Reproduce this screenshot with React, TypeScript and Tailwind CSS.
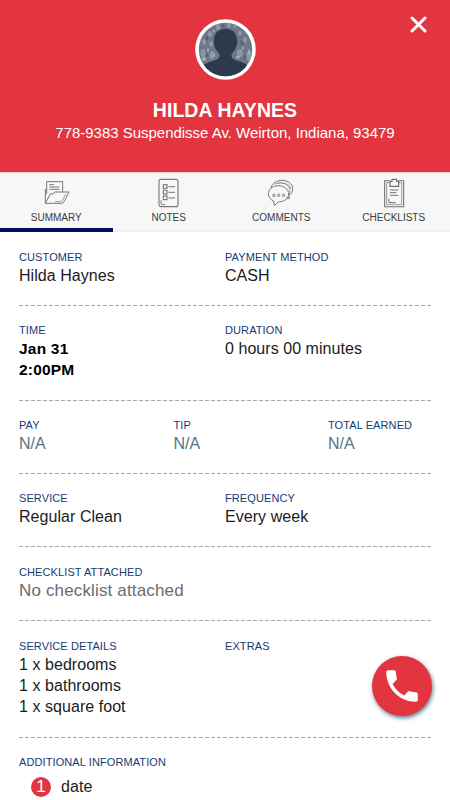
import React from "react";
import { MdPhone } from "react-icons/md";

const FolderIcon = () => (
  <svg className="h-[30px] w-[30px]" viewBox="0 0 90 90" fill="none" stroke="#777" strokeWidth="3" strokeLinejoin="round">
    <path d="M17 48V11h48v30" />
    <path d="M17 34h-4v42l15-28h8l5-6h43L71 68q-3 8-10 8H13" />
    <path d="M25 20h14M25 27h30M25 34h30" />
    <path d="M42 71h15q6 0 9-7l8-16" strokeWidth="2.2" />
  </svg>
);

const NotesIcon = () => (
  <svg className="h-[30px] w-[30px]" viewBox="0 0 90 90" fill="none" stroke="#777" strokeWidth="3.4">
    <rect x="15" y="4" width="57" height="82" rx="6" />
    <rect x="28" y="20" width="11" height="11" />
    <rect x="28" y="37" width="11" height="11" />
    <rect x="28" y="54" width="11" height="11" />
    <path d="M43 26h20M43 43h20M43 60h20M21 67v8q0 5 5 5h7" strokeWidth="3" />
  </svg>
);

const CommentsIcon = () => (
  <svg className="h-[30px] w-[30px]" viewBox="0 0 90 90" fill="none" stroke="#777" strokeWidth="3" strokeLinejoin="round">
    <path d="M37 72c19-1 31-11 31-24 0-14-14-25-31-25S7 34 7 48c0 10 7 17 16 21l2 14z" />
    <path d="M15 29C19 15 32 7 48 7c18 0 32 11 32 25 0 10-5 16-11 20l1 10-9-3" />
    <path d="M25 19c13-7 37-6 48 13M32 16c16-5 34 0 43 14M70 49c2-9 2-14-1-22" strokeWidth="2" />
    <circle cx="24" cy="52" r="3.500" />
    <circle cx="38" cy="52" r="3.500" />
    <circle cx="53" cy="52" r="3.500" />
  </svg>
);

const ClipboardIcon = () => (
  <svg className="h-[30px] w-[30px]" viewBox="0 0 90 90" fill="none" stroke="#707070" strokeWidth="3.2">
    <path d="M32 8H17v78h57V8H59" />
    <path d="M32 14H23v66h45V14h-9" strokeWidth="2" />
    <path d="M33 25V10h6V4h14v6h6v15z" strokeWidth="3.4" />
    <path d="M33 36h25M33 44h19M33 52h25M30 62v12h20" strokeWidth="3" />
  </svg>
);

const tabs = [
  { label: "SUMMARY", icon: <FolderIcon />, active: true },
  { label: "NOTES", icon: <NotesIcon /> },
  { label: "COMMENTS", icon: <CommentsIcon /> },
  { label: "CHECKLISTS", icon: <ClipboardIcon /> },
];

const Avatar = () => (
  <svg className="h-[61px] w-[61px]" viewBox="0 0 61 61">
    <defs>
      <clipPath id="avatar">
        <circle cx="30.5" cy="30.5" r="26.7" />
      </clipPath>
    </defs>
    <circle cx="30.5" cy="30.5" r="30.3" fill="#fff" />
    <g clipPath="url(#avatar)">
      <rect width="61" height="61" fill="#6d7789" />
      <g fill="#8f97a5">
        <ellipse cx="23" cy="8" rx="2" ry="3" />
        <ellipse cx="34" cy="6" rx="2" ry="3" />
        <ellipse cx="15" cy="15" rx="2" ry="3" />
        <ellipse cx="9" cy="23" rx="2" ry="3" />
        <ellipse cx="16" cy="25" rx="1.8" ry="3" />
        <ellipse cx="8" cy="34" rx="2.500" ry="4" />
        <ellipse cx="17" cy="36" rx="2.500" ry="4" />
        <ellipse cx="45" cy="14" rx="2" ry="2.500" />
        <ellipse cx="50" cy="21" rx="2" ry="3" />
        <ellipse cx="45" cy="34" rx="3" ry="4" />
        <ellipse cx="54" cy="37" rx="3" ry="5" />
        <ellipse cx="40" cy="7" rx="1.5" ry="2" />
      </g>
      <g fill="#a8aeb9">
        <ellipse cx="19" cy="12" rx="1" ry="1.6" />
        <ellipse cx="13" cy="31" rx="1.2" ry="1.8" />
        <ellipse cx="19" cy="36" rx="1" ry="2" />
        <ellipse cx="9" cy="40" rx="2" ry="2" />
        <ellipse cx="43" cy="38" rx="2" ry="1.5" />
        <ellipse cx="54" cy="33" rx="1.2" ry="3" />
        <ellipse cx="48" cy="29" rx="1" ry="1.6" />
      </g>
      <g fill="#566277">
        <ellipse cx="12" cy="19" rx="1.5" ry="2.500" />
        <ellipse cx="28" cy="7" rx="1.2" ry="2" />
        <ellipse cx="47" cy="24" rx="1.8" ry="2.500" />
        <ellipse cx="50" cy="38" rx="1.4" ry="2.500" />
        <ellipse cx="12" cy="36" rx="1.2" ry="2" />
      </g>
      <path
        d="M30.500 9.700C23 9.700 18.800 15 18.800 22c0 6 2.200 9 4.500 11.500 1.700 2 1.700 4.500.2 6-1.500 1.300-4 1.800-6 2.400C11 43.500 8 46 5 50v11h51V50c-3-4-6-6.500-12.500-8.100-2-.6-4.500-1.100-6-2.400-1.500-1.500-1.500-4 .2-6 2.300-2.500 4.500-5.500 4.500-11.500 0-7-4.200-12.300-11.700-12.300z"
        fill="#2d3a4c"
      />
    </g>
  </svg>
);

type FieldProps = { label: string; className?: string; children?: React.ReactNode };

const Field = ({ label, className = "flex-1", children }: FieldProps) => (
  <div className={className}>
    <div className="text-[11px] leading-[15px] tracking-[0.1px] text-[#173a72]">{label}</div>
    <div className="text-[16px] leading-[21.4px] tracking-[0.05px]">{children}</div>
  </div>
);

const Divider = () => (
  <div className="h-px shrink-0 bg-[repeating-linear-gradient(90deg,#a6a6a6_0_4px,#fff_4px_6px)]" />
);

const earnings = [
  { label: "PAY", className: "w-[37.5%]" },
  { label: "TIP", className: "w-[37.5%]" },
  { label: "TOTAL EARNED", className: "w-1/4" },
];

export default function App() {
  return (
    <div className="relative flex h-[800px] w-[450px] flex-col overflow-hidden bg-white font-['Liberation_Sans',Arial,sans-serif] text-[#1c1c1c]">
      <header className="flex h-[172px] shrink-0 flex-col items-center bg-[#e2353f] pt-[19px] text-white">
        <Avatar />
        <h1 className="mt-[18px] text-[19.5px] leading-6 font-bold tracking-[0.05px]">HILDA HAYNES</h1>
        <p className="text-[15px] leading-[22px] tracking-[-0.02px] whitespace-nowrap">
          778-9383 Suspendisse Av. Weirton, Indiana, 93479
        </p>
      </header>
      <button className="absolute top-4 right-[23.5px]" aria-label="Close">
        <svg className="h-[17px] w-[17px]" viewBox="0 0 17 17" stroke="#fff" strokeWidth="3" strokeLinecap="round">
          <path d="M2 2l13 13M15 2L2 15" />
        </svg>
      </button>

      <nav className="flex h-[60px] shrink-0 border-t border-[#f3c9cb] bg-[#f7f7f7]">
        {tabs.map((tab) => (
          <div
            key={tab.label}
            className={`flex flex-1 flex-col items-center pt-[5px] ${tab.active ? "border-b-4 border-[#020f5e]" : "border-b-2 border-[#efefef]"}`}
          >
            {tab.icon}
            <span className="mt-[3px] text-[10px] leading-[14px] text-[#3b3b3b]">{tab.label}</span>
          </div>
        ))}
      </nav>

      <main className="flex flex-col px-[19px]">
        <div className="flex h-[73px] pt-[18px]">
          <Field label="CUSTOMER">Hilda Haynes</Field>
          <Field label="PAYMENT METHOD">CASH</Field>
        </div>
        <Divider />
        <div className="flex h-[94px] pt-[17px]">
          <Field label="TIME">
            <div className="text-[15.5px] font-bold tracking-[0.2px] text-black">
              Jan 31
              <br />
              2:00PM
            </div>
          </Field>
          <Field label="DURATION">0 hours 00 minutes</Field>
        </div>
        <Divider />
        <div className="flex h-[72px] pt-[17px]">
          {earnings.map((item) => (
            <Field key={item.label} {...item}>
              <span className="text-[#567485]">N/A</span>
            </Field>
          ))}
        </div>
        <Divider />
        <div className="flex h-[72px] pt-[17px]">
          <Field label="SERVICE">Regular Clean</Field>
          <Field label="FREQUENCY">Every week</Field>
        </div>
        <Divider />
        <div className="flex h-[73px] pt-[17.5px]">
          <Field label="CHECKLIST ATTACHED">
            <span className="text-[17px] tracking-[0.15px] text-[#6c6c6c]">No checklist attached</span>
          </Field>
        </div>
        <Divider />
        <div className="flex h-[116px] pt-[17.5px]">
          <Field label="SERVICE DETAILS">
            <div>1 x bedrooms</div>
            <div>1 x bathrooms</div>
            <div>1 x square foot</div>
          </Field>
          <Field label="EXTRAS" />
        </div>
        <Divider />
        <div className="pt-[17px]">
          <Field label="ADDITIONAL INFORMATION">
            <div className="flex items-center pt-[6px] pl-3">
              <span className="flex h-5 w-5 items-center justify-center rounded-full bg-[#e2353f] text-[17px] text-white">1</span>
              <span className="ml-[10px]">date</span>
            </div>
          </Field>
        </div>
      </main>

      <button
        className="absolute top-[656px] left-[372px] flex h-[60px] w-[60px] items-center justify-center rounded-full bg-[#e2353f] text-white shadow-[1px_2px_4px_#335a6ecc]"
        aria-label="Call"
      >
        <MdPhone className="h-[42px] w-[42px]" />
      </button>
    </div>
  );
}
